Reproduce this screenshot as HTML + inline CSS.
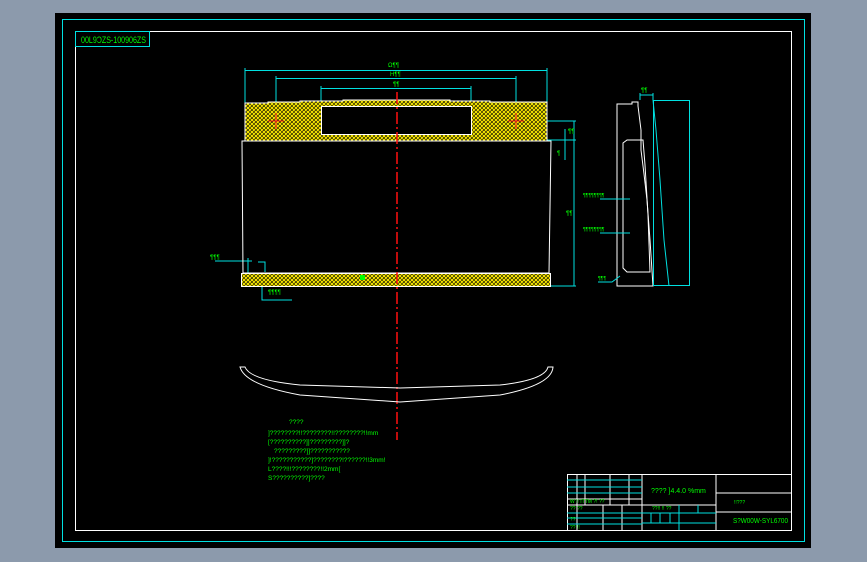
<!DOCTYPE html>
<html><head><meta charset="utf-8"><style>
html,body{margin:0;padding:0;background:#8c9aac;width:867px;height:562px;overflow:hidden}
svg{display:block}
text{font-family:"Liberation Sans",sans-serif;fill:#00ff00}
</style></head><body>
<svg width="867" height="562" viewBox="0 0 867 562" xmlns="http://www.w3.org/2000/svg">
<defs>
<pattern id="h" width="4" height="4" patternUnits="userSpaceOnUse">
<rect width="4" height="4" fill="#000"/>
<path d="M0 0L4 4M4 0L0 4M-1 3L1 5M3 -1L5 1M-1 1L1 -1M3 5L5 3" stroke="#f0e000" stroke-width="1.3"/>
</pattern>
</defs>
<rect x="55" y="13" width="756" height="535" fill="#000"/>
<rect x="62.5" y="19.5" width="742" height="522" fill="none" stroke="#00e0e0" stroke-width="1"/>
<rect x="75.5" y="31.5" width="716" height="499" fill="none" stroke="#fff" stroke-width="1"/>
<rect x="75.5" y="31.5" width="74" height="15" fill="none" stroke="#00e0e0"/>
<text x="81" y="43" font-size="9" textLength="65" lengthAdjust="spacingAndGlyphs">00L9ƆZS-100906ZS</text>

<g stroke="#00e0e0" fill="none" stroke-width="1">
<path d="M245 68V105M547 68V105M245 70.5H547"/>
<path d="M276 76V121M516 76V121M276 78.5H516"/>
<path d="M321 86V107M471 86V107M321 88.5H471"/>
<path d="M457 107V133M547 121H576M547 140H576M574 121V286M551 286H576M565 129V160M464 141H547"/>
<path d="M215 261H252M248 258V280M262 276V300H292M258 262H265V272"/>
</g>
<text x="388" y="67" font-size="6">Ω¶¶</text>
<text x="390" y="76" font-size="6">H¶¶</text>
<text x="393" y="86" font-size="6">¶¶</text>
<text x="451" y="125" font-size="6">¶¶</text>
<text x="568" y="133" font-size="6">¶¶</text>
<text x="557" y="155" font-size="6">¶</text>
<text x="566" y="215" font-size="6">¶¶</text>
<text x="210" y="259" font-size="6">¶¶¶</text>
<text x="268" y="294" font-size="6">¶¶¶¶</text>

<path d="M245 103H268V102H300V101H343V100H450V101H490V102H547V141H245Z" fill="url(#h)" stroke="#fff"/>
<rect x="321.5" y="106.5" width="150" height="28" fill="#000" stroke="#fff"/>
<path d="M242 141H551L549 273H243Z" fill="none" stroke="#fff"/>
<rect x="241.5" y="273.5" width="309" height="13" fill="url(#h)" stroke="#fff"/>
<rect x="360" y="275" width="5" height="5" fill="#00ff00"/>
<g stroke="#ff2020"><path d="M268 121H284M276 113V129M508 121H524M516 113V129"/></g>
<path d="M397 92V440" stroke="#ff1010" stroke-width="1.5" stroke-dasharray="12 3 2 3"/>

<path d="M617 104H632V102H638V106L641 130V150L644 174L647 200L650 240L653 286H617Z" fill="none" stroke="#fff"/>
<path d="M623 143L627 140H643L645 165L648 215L650 272H627L623 268Z" fill="none" stroke="#fff"/>
<path d="M653 100L656 130L660 180L664 240L669 286" fill="none" stroke="#00e0e0"/>
<rect x="653.5" y="100.5" width="36" height="185" fill="none" stroke="#00e0e0"/>
<path d="M640 93V100M653 93V100M640 95H653M600 199H630M600 233H630M598 282H612L620 276" stroke="#00e0e0" fill="none"/>
<text x="641" y="92" font-size="6">¶¶</text>
<text x="583" y="197" font-size="5">¶¶¶¶¶¶¶¶</text>
<text x="583" y="231" font-size="5">¶¶¶¶¶¶¶¶</text>
<text x="598" y="280" font-size="5">¶¶¶</text>

<path d="M240 367H245Q250 380 300 385L400 388L500 385Q545 380 548 367H553Q552 385 500 395L400 402L300 395Q245 385 240 367Z" fill="none" stroke="#fff"/>

<g font-size="6.5">
<text x="289" y="424">????</text>
<text x="268" y="435">]????????!!????????!!????????!!mm</text>
<text x="268" y="444">[??????????]]?????????]]?</text>
<text x="274" y="453">?????????]]???????????</text>
<text x="268" y="462">]!???????????]????????!??????!!3mm!</text>
<text x="268" y="471">L????!!!????????!!2mm[</text>
<text x="268" y="480">S??????????]????</text>
</g>

<g stroke="#fff" fill="none">
<rect x="567.5" y="474.5" width="224" height="56"/>
<path d="M642 474V530M716 474V530M716 493H791M716 512H791M642 505H716M577 474V530M585 474V505M610 474V505M629 474V505M567 499H642M567 505H642M603 505V530M622 505V530"/>
</g>
<g stroke="#00e0e0"><path d="M567 480H642M567 487H642M567 493H642M567 513H642M567 518H642M567 524H642M642 513H716M642 523H716M679 505V530M698 505V513M651 513V523M660 513V523M670 513V523"/></g>
<g font-size="5">
<text x="651" y="493" font-size="7">???? ]4.4.0 %mm</text>
<text x="734" y="504">!!???</text>
<text x="733" y="523" font-size="7" textLength="55" lengthAdjust="spacingAndGlyphs">S?W00W-SYL6700</text>
<text x="570" y="503">W !!   ITTM    ?!   ??</text>
<text x="570" y="510">??           ??</text>
<text x="652" y="510">??!!      !!    ??</text>
<text x="570" y="521">??</text>
<text x="570" y="529">??           !!</text>
</g>
</svg>
</body></html>
